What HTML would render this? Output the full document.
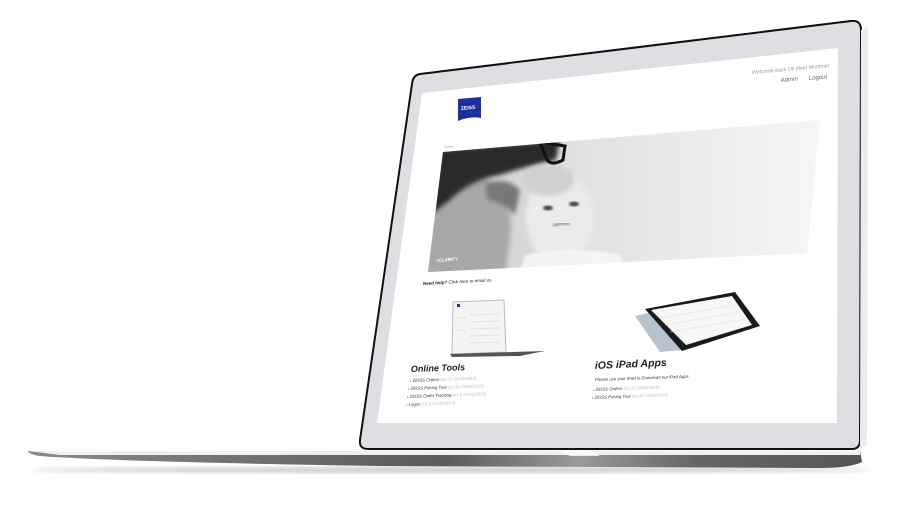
<!DOCTYPE html>
<html><head><meta charset="utf-8"><style>
html,body{margin:0;padding:0;background:#fff;width:910px;height:509px;overflow:hidden}
svg{display:block}
text{font-family:"Liberation Sans",sans-serif}
</style></head><body>
<svg width="910" height="509" viewBox="0 0 910 509" xmlns="http://www.w3.org/2000/svg">
<defs>
<linearGradient id="base" x1="0" y1="0" x2="1" y2="0">
<stop offset="0" stop-color="#8a8a8a"/><stop offset="0.5" stop-color="#5a5a5a"/><stop offset="0.66" stop-color="#9a9a9a"/><stop offset="0.8" stop-color="#666"/><stop offset="1" stop-color="#555"/>
</linearGradient>
<linearGradient id="photo" x1="0" y1="0" x2="1" y2="0">
<stop offset="0" stop-color="#c8c8c8"/><stop offset="0.4" stop-color="#e2e2e2"/><stop offset="1" stop-color="#f6f6f6"/>
</linearGradient>
<filter id="bl"><feGaussianBlur stdDeviation="2.5"/></filter>
<filter id="bl2"><feGaussianBlur stdDeviation="1"/></filter>
<clipPath id="pc"><polygon points="443,152 820,120 807,253 428,272"/></clipPath>
</defs>
<ellipse cx="450" cy="470" rx="420" ry="3" fill="#ccc" filter="url(#bl)"/>
<path d="M28,451 L860,451 L862,462 Q850,468 820,468 L380,466 Q120,462 40,456 Q28,454 28,451Z" fill="url(#base)"/>
<path d="M28,451 L860,451 L860,455 L60,455 Z" fill="#f0f0f0"/>
<path d="M560,451 L590,451 L600,456 L570,456Z" fill="#fff" opacity=".8"/>
<path d="M420,74 Q413,75 412,84 L360,440 Q359,449 368,449 L852,449 Q860,449 860,440 L861,30 Q861,20 851,21 Z" fill="#dfdfe3" stroke="#111" stroke-width="2"/>
<path d="M861,30 L868,28 L867,445 L860,449Z" fill="#ececec"/>
<polygon points="422,93 838,48 837,423 377,423" fill="#fff"/>
<text x="752" y="74" font-size="5.3" fill="#999" transform="rotate(-5 752 74)" font-style="italic">Welcome back Oli (live) Mortimer</text>
<text x="781" y="82" font-size="6" fill="#666" transform="rotate(-5 781 82)">Admin</text>
<text x="809" y="80" font-size="6" fill="#666" transform="rotate(-5 809 80)">Logout</text>
<path d="M458,99 L481,97 L481,118 Q470,116 458,121Z" fill="#1f2f9e"/>
<text x="461" y="110" font-size="5" fill="#fff" font-weight="bold" font-family="Liberation Serif" transform="rotate(-5 461 110)">ZEISS</text>
<text x="444" y="148" font-size="3.5" fill="#aaa">Home</text>
<polygon points="443,152 820,120 807,253 428,272" fill="url(#photo)"/>
<g clip-path="url(#pc)">
<path d="M425,185 Q455,170 490,180 Q515,200 510,240 L505,275 L425,275Z" fill="#a8a8a8" filter="url(#bl)"/>
<path d="M430,150 L560,140 L556,160 Q520,168 500,175 Q470,180 450,200 L430,215Z" fill="#2a2a2a" filter="url(#bl)"/>
<path d="M485,185 Q505,175 520,190 L515,215 Q500,200 488,200Z" fill="#777" filter="url(#bl)"/>
<ellipse cx="560" cy="218" rx="34" ry="44" fill="#ebebeb" filter="url(#bl)"/>
<ellipse cx="548" cy="180" rx="26" ry="16" fill="#d0d0d0" filter="url(#bl)"/>
<ellipse cx="548" cy="208" rx="5" ry="2.5" fill="#444" filter="url(#bl2)"/>
<ellipse cx="574" cy="204" rx="5" ry="2.5" fill="#444" filter="url(#bl2)"/>
<path d="M553,226 Q562,222 570,224" stroke="#888" stroke-width="2" fill="none" filter="url(#bl2)"/>
<path d="M540,142 L565,146 L563,160 Q548,168 545,155Z" fill="none" stroke="#111" stroke-width="3"/>
<path d="M525,255 Q570,245 620,255 L625,270 L520,275Z" fill="#f4f4f4" filter="url(#bl2)"/>
</g>
<text x="436" y="262" font-size="4.5" fill="#fff" font-weight="bold" font-style="italic" transform="rotate(-4 436 262)">≡CLARITY</text>
<text x="423" y="285" font-size="4.5" fill="#222" font-style="italic" transform="rotate(-3 423 285)"><tspan font-weight="bold">Need help?</tspan> Click here to email us</text>
<polygon points="453,302 504,300 506,352 452,354" fill="#f4f4f4" stroke="#bbb" stroke-width="1"/>
<g stroke="#ddd" stroke-width="0.7"><line x1="470" y1="315" x2="500" y2="314"/><line x1="470" y1="322" x2="500" y2="321"/><line x1="470" y1="329" x2="500" y2="328"/><line x1="470" y1="336" x2="500" y2="335"/><line x1="470" y1="343" x2="500" y2="342"/><line x1="458" y1="318" x2="466" y2="318"/><line x1="458" y1="330" x2="466" y2="330"/></g>
<rect x="457" y="304" width="3" height="3" fill="#1f2f9e"/>
<path d="M450,354 L545,351 L520,356 L452,357Z" fill="#555"/>
<polygon points="635,316 652,312 684,350 660,352" fill="#b9c3cf"/>
<polygon points="645,309 735,292 760,326 682,351" fill="#1a1a1a"/>
<polygon points="651,310 732,296 752,325 686,345" fill="#f8f8f8"/>
<g stroke="#ddd" stroke-width="0.5"><line x1="660" y1="318" x2="735" y2="305"/><line x1="665" y1="325" x2="740" y2="312"/><line x1="670" y1="332" x2="745" y2="319"/></g>
<text x="411" y="372" font-size="9" fill="#222" font-weight="bold" font-style="italic" transform="rotate(-2 411 372)">Online Tools</text>
<g font-size="4.3" font-style="italic" fill="#333">
<text x="410" y="382" transform="rotate(-2 410 382)">› ZEISS Orders <tspan fill="#bbb">(v2.70 20/04/2015)</tspan></text>
<text x="408" y="390" transform="rotate(-2 408 390)">› ZEISS Pricing Tool <tspan fill="#bbb">(v2.40 23/04/2015)</tspan></text>
<text x="407" y="398" transform="rotate(-2 407 398)">› ZEISS Order Tracking <tspan fill="#bbb">(v1.0 01/02/2015)</tspan></text>
<text x="406" y="406" transform="rotate(-2 406 406)">› Logon <tspan fill="#bbb">(v1.0 01/02/2015)</tspan></text>
</g>
<text x="595" y="369" font-size="10.5" fill="#222" font-style="italic" font-weight="bold" transform="rotate(-2.5 595 369)">iOS iPad Apps</text>
<g font-size="4.3" font-style="italic" fill="#333">
<text x="595" y="381" transform="rotate(-2 595 381)">Please use your iPad to Download our iPad Apps</text>
<text x="593" y="391" transform="rotate(-2 593 391)">› ZEISS Orders <tspan fill="#bbb">(v2.70 20/04/2015)</tspan></text>
<text x="592" y="399" transform="rotate(-2 592 399)">› ZEISS Pricing Tool <tspan fill="#bbb">(v2.40 23/04/2015)</tspan></text>
</g>
</svg>
</body></html>
